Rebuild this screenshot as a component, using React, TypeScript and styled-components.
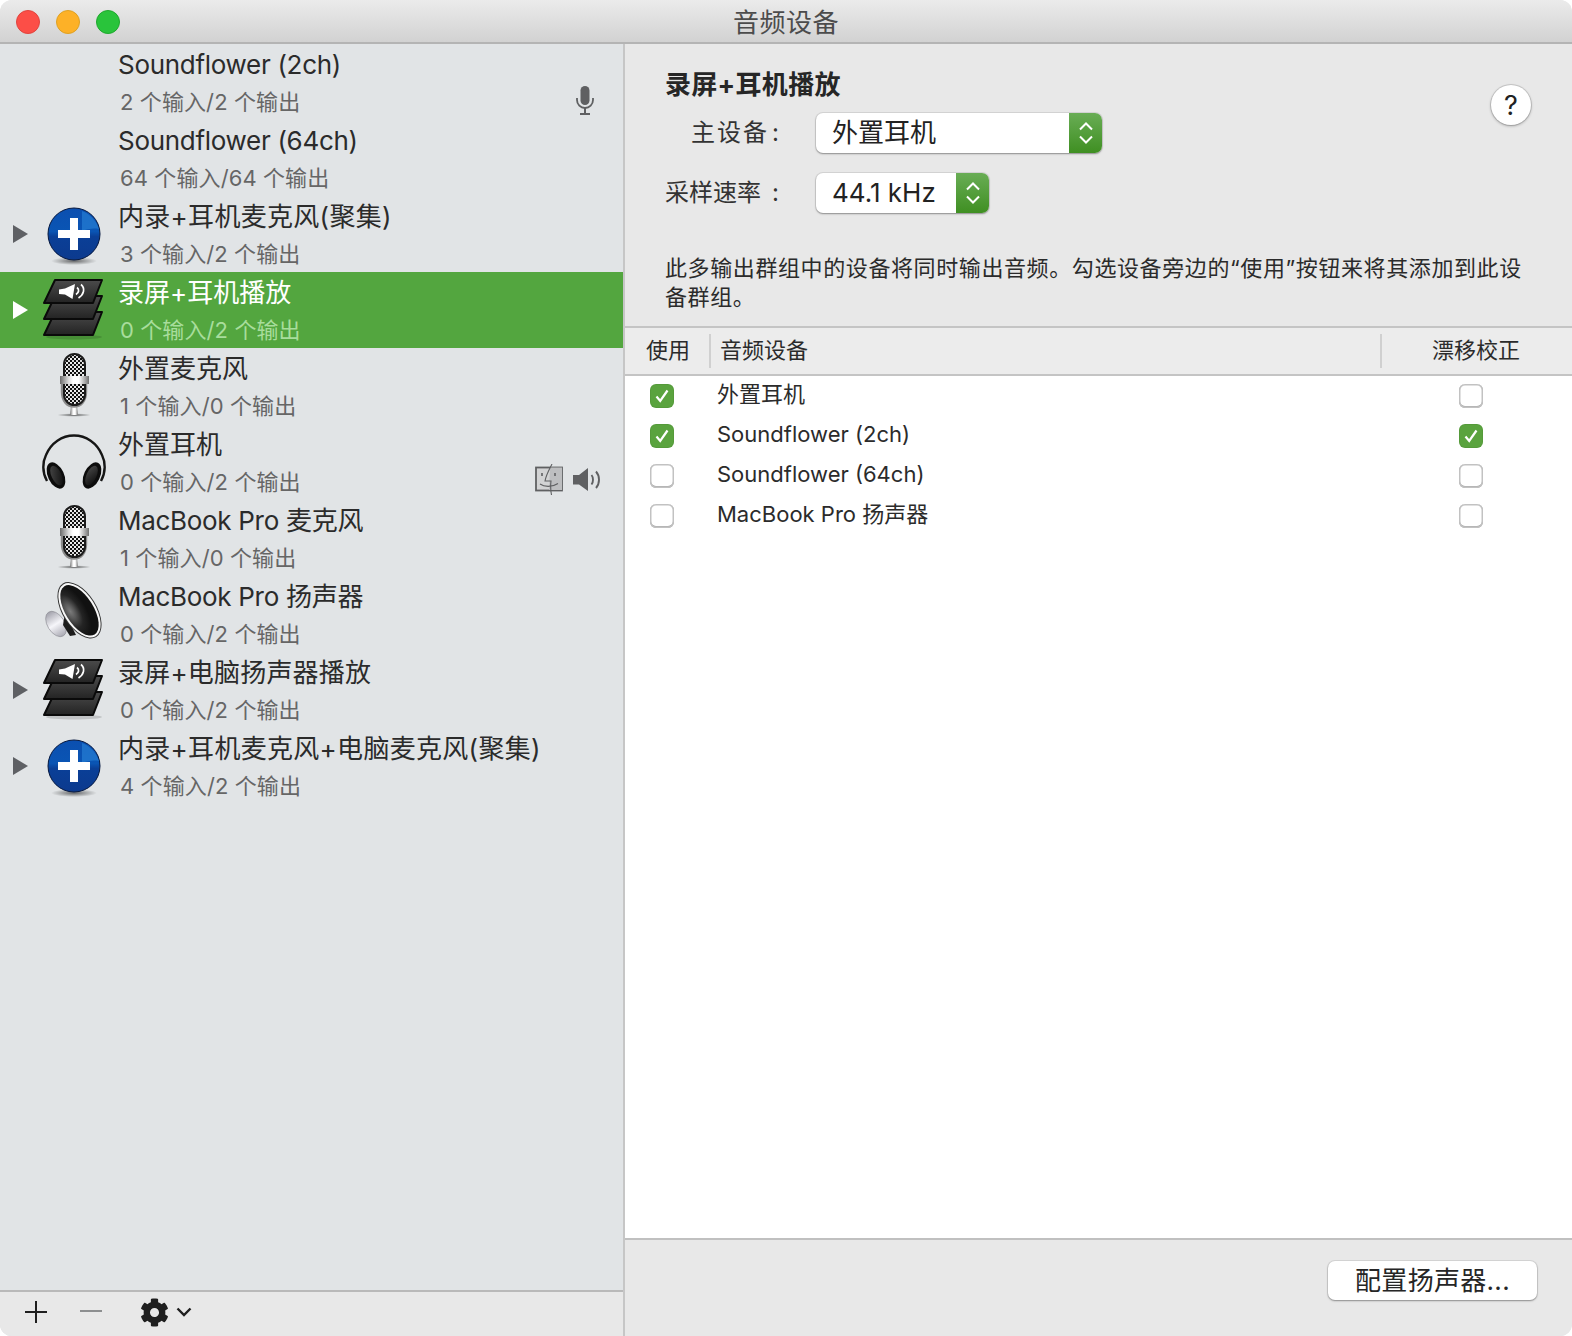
import React from "react";
import styled, { createGlobalStyle } from "styled-components";
import { FaCog } from "react-icons/fa";

const FONT = `Inter, "Noto Sans CJK SC", "Noto Sans", sans-serif`;

const GlobalStyle = createGlobalStyle`
  html, body {
    margin: 0;
    padding: 0;
    background: #fff;
    font-family: ${FONT};
  }
  * {
    box-sizing: border-box;
  }
`;

type IconName = "none" | "aggregate" | "stack" | "mic" | "headphones" | "speaker";

type Device = {
  name: string;
  info: string;
  icon: IconName;
  expandable?: boolean;
  selected?: boolean;
  status?: "input" | "output";
};

const devices: Device[] = [
  { name: "Soundflower (2ch)", info: "2 个输入/2 个输出", icon: "none", status: "input" },
  { name: "Soundflower (64ch)", info: "64 个输入/64 个输出", icon: "none" },
  { name: "内录+耳机麦克风(聚集)", info: "3 个输入/2 个输出", icon: "aggregate", expandable: true },
  { name: "录屏+耳机播放", info: "0 个输入/2 个输出", icon: "stack", expandable: true, selected: true },
  { name: "外置麦克风", info: "1 个输入/0 个输出", icon: "mic" },
  { name: "外置耳机", info: "0 个输入/2 个输出", icon: "headphones", status: "output" },
  { name: "MacBook Pro 麦克风", info: "1 个输入/0 个输出", icon: "mic" },
  { name: "MacBook Pro 扬声器", info: "0 个输入/2 个输出", icon: "speaker" },
  { name: "录屏+电脑扬声器播放", info: "0 个输入/2 个输出", icon: "stack", expandable: true },
  { name: "内录+耳机麦克风+电脑麦克风(聚集)", info: "4 个输入/2 个输出", icon: "aggregate", expandable: true },
];

const outputs = [
  { name: "外置耳机", use: true, drift: false },
  { name: "Soundflower (2ch)", use: true, drift: true },
  { name: "Soundflower (64ch)", use: false, drift: false },
  { name: "MacBook Pro 扬声器", use: false, drift: false },
];

// latin names run a bit narrower and the +/( glyphs a bit wider than in our fonts
const nameTracking = (name: string) => {
  if (/[a-z]/i.test(name)) return -0.3;
  if (name.includes("(")) return 0.3;
  if (name.includes("+") && name.length > 7) return 0.2;
  return 0;
};

const AggregateIcon = () => (
  <svg width="72" height="72" viewBox="0 0 72 72">
    <defs>
      <linearGradient id="aggBlue" x1="0" y1="0" x2="0" y2="1">
        <stop offset="0" stopColor="#0b4fb0" />
        <stop offset="0.45" stopColor="#0a55b4" />
        <stop offset="0.55" stopColor="#0a3f97" />
        <stop offset="1" stopColor="#0c3a8e" />
      </linearGradient>
      <radialGradient id="aggShadow">
        <stop offset="0" stopColor="#000" stopOpacity="0.55" />
        <stop offset="1" stopColor="#000" stopOpacity="0" />
      </radialGradient>
    </defs>
    <ellipse cx="36" cy="63" rx="23" ry="4" fill="url(#aggShadow)" />
    <circle cx="36" cy="36" r="26" fill="url(#aggBlue)" stroke="#06183f" strokeWidth="1" />
    <path d="M44 13C52 16 58 22 61 31C55 30 49 31 44 33Z" fill="#2a86d8" opacity="0.6" />
    <rect x="20" y="32" width="32" height="8" fill="#fff" />
    <rect x="32" y="20" width="8" height="32" fill="#fff" />
  </svg>
);

const StackIcon = () => (
  <svg width="72" height="72" viewBox="0 0 72 72">
    <defs>
      <linearGradient id="stackDark" x1="0" y1="0" x2="0" y2="1">
        <stop offset="0" stopColor="#4b4b4b" />
        <stop offset="1" stopColor="#232323" />
      </linearGradient>
    </defs>
    <ellipse cx="36" cy="63" rx="28" ry="2.5" fill="#000" opacity="0.14" />
    <path d="M17 38H64L55 61H6Z" fill="url(#stackDark)" stroke="#0a0a0a" strokeWidth="2" strokeLinejoin="round" />
    <path d="M17 22H64L55 45H6Z" fill="url(#stackDark)" stroke="#0a0a0a" strokeWidth="2" strokeLinejoin="round" />
    <path d="M17 6H64L55 29H6Z" fill="url(#stackDark)" stroke="#0a0a0a" strokeWidth="2" strokeLinejoin="round" />
    <path d="M21 15.5L27 14.500L37 10L34.500 25L27 20.500L21 20Z" fill="#fff" />
    <path d="M39 13.500C41.500 15.500 41 18.500 38 20.500" fill="none" stroke="#fff" strokeWidth="1.700" />
    <path d="M43 10.500C47.500 14.500 46 20.500 40.500 24" fill="none" stroke="#fff" strokeWidth="1.700" />
  </svg>
);

const MicIcon = () => (
  <svg width="72" height="72" viewBox="0 0 72 72">
    <defs>
      <pattern id="micMesh" width="4" height="4" patternUnits="userSpaceOnUse">
        <rect width="4" height="4" fill="#111" />
        <rect width="2" height="2" fill="#f0f0f0" />
        <rect x="2" y="2" width="2" height="2" fill="#d8d8d8" />
      </pattern>
      <linearGradient id="micSilver" x1="0" y1="0" x2="1" y2="0">
        <stop offset="0" stopColor="#6a6a6a" />
        <stop offset="0.3" stopColor="#dcdcdc" />
        <stop offset="0.45" stopColor="#ffffff" />
        <stop offset="0.65" stopColor="#ffffff" />
        <stop offset="1" stopColor="#707070" />
      </linearGradient>
      <radialGradient id="micShadow">
        <stop offset="0" stopColor="#000" stopOpacity="0.6" />
        <stop offset="1" stopColor="#000" stopOpacity="0" />
      </radialGradient>
    </defs>
    <ellipse cx="36" cy="65" rx="17" ry="1.800" fill="url(#micShadow)" />
    <path d="M33 56H39L40 65H32Z" fill="url(#micSilver)" />
    <path d="M24 30V42C24 51 29 56.500 36 56.500C43 56.500 48 51 48 42V30" fill="none" stroke="#8b8b8b" strokeWidth="2.400" />
    <rect x="26" y="4" width="21" height="51" rx="10.500" fill="url(#micMesh)" stroke="#1c1c1c" strokeWidth="2" />
    <rect x="22" y="26" width="29" height="8" fill="url(#micSilver)" />
  </svg>
);

const HeadphonesIcon = () => (
  <svg width="72" height="72" viewBox="0 0 72 72">
    <defs>
      <linearGradient id="cupDark" x1="0" y1="0" x2="1" y2="1">
        <stop offset="0" stopColor="#4a4a4a" />
        <stop offset="1" stopColor="#0b0b0b" />
      </linearGradient>
    </defs>
    <path d="M9 55C4 46 4.500 36 8 29C13 17 24 9.500 36 9.500C48 9.500 59 17 64 29C67.500 36 68 46 63 55" fill="none" stroke="#161616" strokeWidth="2.400" />
    <ellipse cx="18" cy="49.500" rx="8" ry="14" fill="#0c0c0c" transform="rotate(-25 18 49.500)" />
    <ellipse cx="18.500" cy="49.500" rx="5" ry="10.500" fill="url(#cupDark)" transform="rotate(-25 18.500 49.500)" />
    <ellipse cx="54" cy="49.500" rx="8" ry="14" fill="#0c0c0c" transform="rotate(25 54 49.500)" />
    <ellipse cx="53.500" cy="49.500" rx="5" ry="10.500" fill="url(#cupDark)" transform="rotate(25 53.500 49.500)" />
  </svg>
);

const SpeakerIcon = () => (
  <svg width="72" height="72" viewBox="0 0 72 72">
    <defs>
      <linearGradient id="magnet" x1="0" y1="0" x2="0" y2="1">
        <stop offset="0" stopColor="#a0a0aa" />
        <stop offset="0.5" stopColor="#f6f6fa" />
        <stop offset="1" stopColor="#a8a8b2" />
      </linearGradient>
      <radialGradient id="coneDark" cx="0.2" cy="0.43" r="0.55">
        <stop offset="0" stopColor="#7c7c7c" />
        <stop offset="0.25" stopColor="#5a5a5a" />
        <stop offset="0.6" stopColor="#242424" />
        <stop offset="1" stopColor="#111" />
      </radialGradient>
    </defs>
    <ellipse cx="18" cy="46" rx="8.500" ry="14" fill="url(#magnet)" stroke="#8b8b93" strokeWidth="0.600" transform="rotate(-32 18 46)" />
    <path d="M27 35L38 57L32 58L25 47Z" fill="#1c1c1c" />
    <ellipse cx="41.500" cy="32.300" rx="17" ry="31.500" fill="#333" transform="rotate(-32 41.500 32.300)" />
    <ellipse cx="41.500" cy="32.300" rx="16" ry="30.500" fill="#f8f8f8" transform="rotate(-32 41.500 32.300)" />
    <ellipse cx="41.500" cy="32.300" rx="14" ry="28.500" fill="url(#coneDark)" transform="rotate(-32 41.500 32.300)" />
  </svg>
);

const deviceIcons: Record<IconName, React.ComponentType | null> = {
  none: null,
  aggregate: AggregateIcon,
  stack: StackIcon,
  mic: MicIcon,
  headphones: HeadphonesIcon,
  speaker: SpeakerIcon,
};

const InputStatusIcon = () => (
  <svg width="20" height="32" viewBox="0 0 20 32">
    <rect x="5.500" y="1" width="9" height="19" rx="4.500" fill="#5f6062" />
    <path d="M2 13V15C2 19.500 5.500 23 10 23C14.500 23 18 19.500 18 15V13" fill="none" stroke="#5f6062" strokeWidth="1.800" />
    <path d="M10 23V28M5 29H15" stroke="#5f6062" strokeWidth="2" fill="none" />
  </svg>
);

const FinderStatusIcon = () => (
  <svg width="30" height="32" viewBox="0 0 30 32">
    <rect x="1" y="3.500" width="26" height="23" fill="#d2d3d4" stroke="#5f6062" strokeWidth="1.800" />
    <path d="M15 3.500H27V26H14Z" fill="#bdbec0" />
    <path d="M17 0C14 6 11 11 10 17H16C15.500 21 15.500 26 16.500 31" fill="none" stroke="#5f6062" strokeWidth="1.100" />
    <path d="M7 9V12M20 9V12" stroke="#5f6062" strokeWidth="1.600" />
    <path d="M5 20C9 23 17 23.500 23 19.500" fill="none" stroke="#5f6062" strokeWidth="1.100" />
  </svg>
);

const OutputStatusIcon = () => (
  <svg width="30" height="32" viewBox="0 0 30 32">
    <path d="M1 11H7L16 4V27L7 20.500H1Z" fill="#5f6062" />
    <path d="M19.500 11C21.500 13.500 21.500 18 19.500 20.500" fill="none" stroke="#5f6062" strokeWidth="1.900" />
    <path d="M24 7.500C28 12 28 19.500 24 24" fill="none" stroke="#5f6062" strokeWidth="1.900" />
  </svg>
);

const Stepper = () => (
  <svg width="18" height="28" viewBox="0 0 18 28">
    <path d="M3 10.500L9 4.500L15 10.500M3 17.500L9 23.500L15 17.500" fill="none" stroke="#fff" strokeWidth="2" />
  </svg>
);

const Tick = () => (
  <svg width="16" height="16" viewBox="0 0 16 16">
    <path d="M2.500 8.500L6.200 13L13.500 2.500" fill="none" stroke="#fff" strokeWidth="2.200" />
  </svg>
);

const App = () => {
  return (
    <Window>
      <GlobalStyle />
      <TitleBar>
        <Lights>
          <Light $color="#fc4e47" $edge="#e0443e" />
          <Light $color="#fdb127" $edge="#dea123" />
          <Light $color="#29c43b" $edge="#1fa82e" />
        </Lights>
        <WindowTitle>音频设备</WindowTitle>
      </TitleBar>
      <Main>
        <Sidebar>
          <DeviceList>
            {devices.map((device) => {
              const Icon = deviceIcons[device.icon];
              return (
                <DeviceRow key={device.name} $selected={device.selected}>
                  <Disclosure>
                    {device.expandable && <Triangle $selected={device.selected} />}
                  </Disclosure>
                  <IconSlot>{Icon && <Icon />}</IconSlot>
                  <DeviceText>
                    <DeviceName $selected={device.selected} $tracking={nameTracking(device.name)}>
                      {device.name}
                    </DeviceName>
                    <DeviceInfo $selected={device.selected}>{device.info}</DeviceInfo>
                  </DeviceText>
                  {device.status === "input" && (
                    <Status $inset={28} $drop={3}>
                      <InputStatusIcon />
                    </Status>
                  )}
                  {device.status === "output" && (
                    <Status $inset={21} $drop={4}>
                      <FinderStatusIcon />
                      <OutputStatusIcon />
                    </Status>
                  )}
                </DeviceRow>
              );
            })}
          </DeviceList>
          <SidebarToolbar>
            <ToolButton $color="#1f1f1f">
              <svg width="24" height="24" viewBox="0 0 24 24">
                <path d="M12 1V23M1 12H23" stroke="currentColor" strokeWidth="2" />
              </svg>
            </ToolButton>
            <ToolButton $color="#8d8f90">
              <svg width="24" height="24" viewBox="0 0 24 24">
                <path d="M1 11H23" stroke="currentColor" strokeWidth="2" />
              </svg>
            </ToolButton>
            <GearButton>
              <FaCog size={29} />
              <svg width="16" height="10" viewBox="0 0 16 10">
                <path d="M1.500 1.500L8 8L14.500 1.500" fill="none" stroke="currentColor" strokeWidth="2.400" />
              </svg>
            </GearButton>
          </SidebarToolbar>
        </Sidebar>
        <Detail>
          <DetailHead>
            <HeadRow>
              <Form>
                <DetailTitle>录屏+耳机播放</DetailTitle>
                <Field>
                  <FieldLabel $tracking={2}>
                    主设备<Colon $gap={3}>:</Colon>
                  </FieldLabel>
                  <Select $width={286}>
                    <SelectValue>外置耳机</SelectValue>
                    <SelectArrow>
                      <Stepper />
                    </SelectArrow>
                  </Select>
                </Field>
                <Field>
                  <FieldLabel $tracking={0}>
                    采样速率<Colon $gap={11}>:</Colon>
                  </FieldLabel>
                  <Select $width={173}>
                    <SelectValue>44.1 kHz</SelectValue>
                    <SelectArrow>
                      <Stepper />
                    </SelectArrow>
                  </Select>
                </Field>
              </Form>
              <HelpButton>?</HelpButton>
            </HeadRow>
            <Description>
              此多输出群组中的设备将同时输出音频。勾选设备旁边的“使用”按钮来将其添加到此设备群组。
            </Description>
          </DetailHead>
          <Table>
            <TableHead>
              <UseHeader>使用</UseHeader>
              <NameHeader>音频设备</NameHeader>
              <DriftHeader>漂移校正</DriftHeader>
            </TableHead>
            <TableBody>
              {outputs.map((output) => (
                <TableRow key={output.name}>
                  <UseCell>
                    <Checkbox $checked={output.use}>{output.use && <Tick />}</Checkbox>
                  </UseCell>
                  <NameCell>{output.name}</NameCell>
                  <DriftCell>
                    <Checkbox $checked={output.drift}>{output.drift && <Tick />}</Checkbox>
                  </DriftCell>
                </TableRow>
              ))}
            </TableBody>
          </Table>
          <DetailFooter>
            <ConfigButton>配置扬声器...</ConfigButton>
          </DetailFooter>
        </Detail>
      </Main>
    </Window>
  );
};

const Window = styled.div`
  width: 1572px;
  height: 1336px;
  display: flex;
  flex-direction: column;
  border-radius: 12px;
  overflow: hidden;
  background: #e8e8e8;
  color: #262626;
  font-family: ${FONT};
`;

const TitleBar = styled.header`
  flex: none;
  height: 44px;
  display: flex;
  align-items: center;
  justify-content: center;
  position: relative;
  background: linear-gradient(#ebebeb, #d2d2d2);
  border-bottom: 2px solid #b4b4b4;
`;

const Lights = styled.div`
  position: absolute;
  left: 16px;
  top: 10px;
  display: flex;
  gap: 16px;
`;

const Light = styled.span<{ $color: string; $edge: string }>`
  width: 24px;
  height: 24px;
  border-radius: 50%;
  background: ${(p) => p.$color};
  border: 1px solid ${(p) => p.$edge};
`;

const WindowTitle = styled.div`
  font-size: 26px;
  line-height: 44px;
  padding-top: 3px;
  letter-spacing: 0.5px;
  color: #4c4c4c;
`;

const Main = styled.div`
  flex: 1;
  min-height: 0;
  display: flex;
`;

const Sidebar = styled.aside`
  flex: none;
  width: 625px;
  display: flex;
  flex-direction: column;
  background: #e1e4e6;
  border-right: 2px solid #c6c6c6;
`;

const DeviceList = styled.div`
  flex: 1;
`;

const DeviceRow = styled.div<{ $selected?: boolean }>`
  height: 76px;
  display: flex;
  align-items: center;
  background: ${(p) => (p.$selected ? "#53a63f" : "transparent")};
`;

const Disclosure = styled.div`
  flex: none;
  width: 38px;
  padding-left: 13px;
`;

const Triangle = styled.div<{ $selected?: boolean }>`
  width: 15px;
  height: 18px;
  background: ${(p) => (p.$selected ? "#fff" : "#5e6064")};
  clip-path: polygon(0 0, 100% 50%, 0 100%);
`;

const IconSlot = styled.div`
  flex: none;
  width: 72px;
  height: 72px;
  margin-right: 8px;
`;

const DeviceText = styled.div`
  flex: 1;
  min-width: 0;
  height: 76px;
`;

const DeviceName = styled.div<{ $selected?: boolean; $tracking: number }>`
  font-size: 26px;
  line-height: 38px;
  height: 38px;
  margin-top: 2px;
  white-space: nowrap;
  letter-spacing: ${(p) => p.$tracking}px;
  color: ${(p) => (p.$selected ? "#fff" : "#2b2b2b")};
`;

const DeviceInfo = styled.div<{ $selected?: boolean }>`
  font-size: 22px;
  line-height: 36px;
  padding-left: 2px;
  letter-spacing: 0.1px;
  white-space: nowrap;
  color: ${(p) => (p.$selected ? "#a8dd9c" : "#666")};
`;

const Status = styled.div<{ $inset: number; $drop: number }>`
  flex: none;
  align-self: flex-end;
  margin-bottom: ${(p) => p.$drop}px;
  padding-right: ${(p) => p.$inset}px;
  display: flex;
  align-items: center;
  gap: 7px;
`;

const SidebarToolbar = styled.div`
  flex: none;
  height: 46px;
  display: flex;
  align-items: center;
  padding: 0 0 4px 24px;
  background: #e8e8e8;
  border-top: 2px solid #b9b9b9;
`;

const ToolButton = styled.div<{ $color: string }>`
  width: 24px;
  height: 24px;
  margin-right: 31px;
  color: ${(p) => p.$color};
`;

const GearButton = styled.div`
  display: flex;
  align-items: center;
  gap: 7px;
  margin-left: 6px;
  color: #1f1f1f;
`;

const Detail = styled.main`
  flex: 1;
  min-width: 0;
  display: flex;
  flex-direction: column;
`;

const DetailHead = styled.section`
  flex: none;
  height: 282px;
  padding: 23px 0 0 40px;
  background: #e8e8e8;
`;

const HeadRow = styled.div`
  display: flex;
  align-items: flex-start;
  justify-content: space-between;
  padding-right: 41px;
`;

const Form = styled.div`
  display: flex;
  flex-direction: column;
  gap: 20px;
`;

const DetailTitle = styled.h1`
  margin: 0 0 -10px;
  font-size: 26px;
  line-height: 36px;
  font-weight: 700;
  letter-spacing: 0.3px;
  color: #262626;
`;

const Field = styled.div`
  display: grid;
  grid-template-columns: 119px auto;
  column-gap: 32px;
  align-items: center;
  justify-content: start;
`;

const FieldLabel = styled.label<{ $tracking: number }>`
  text-align: right;
  padding-right: 5px;
  font-size: 24px;
  line-height: 40px;
  letter-spacing: ${(p) => p.$tracking}px;
  white-space: nowrap;
  color: #333;
`;

const Colon = styled.span<{ $gap: number }>`
  margin-left: ${(p) => p.$gap}px;
  letter-spacing: 0;
`;

const Select = styled.div<{ $width: number }>`
  width: ${(p) => p.$width}px;
  height: 40px;
  display: flex;
  border-radius: 7px;
  overflow: hidden;
  background: #fff;
  box-shadow: 0 0 0 1px rgba(0, 0, 0, 0.08), 0 1px 2px rgba(0, 0, 0, 0.35);
`;

const SelectValue = styled.div`
  flex: 1;
  padding-left: 16px;
  font-size: 26px;
  line-height: 40px;
  color: #222;
`;

const SelectArrow = styled.div`
  flex: none;
  width: 33px;
  display: flex;
  align-items: center;
  justify-content: center;
  background: linear-gradient(#69ad55, #3f8f22);
`;

const HelpButton = styled.div`
  flex: none;
  width: 40px;
  height: 40px;
  margin-top: 18px;
  border-radius: 50%;
  display: flex;
  align-items: center;
  justify-content: center;
  background: #fff;
  font-size: 27px;
  color: #222;
  box-shadow: 0 0 0 1px rgba(0, 0, 0, 0.12), 0 1px 3px rgba(0, 0, 0, 0.3);
`;

const Description = styled.p`
  margin: 41px 0 0;
  width: 860px;
  font-size: 22px;
  line-height: 29px;
  letter-spacing: 0.6px;
  color: #2b2b2b;
`;

const Table = styled.section`
  flex: 1;
  min-height: 0;
  display: flex;
  flex-direction: column;
  background: #fff;
`;

const TableHead = styled.div`
  flex: none;
  height: 50px;
  display: flex;
  align-items: center;
  padding-bottom: 1px;
  background: #ececec;
  border-top: 2px solid #c4c4c4;
  border-bottom: 2px solid #c4c4c4;
  font-size: 22px;
  color: #2b2b2b;
`;

const UseHeader = styled.div`
  width: 86px;
  height: 34px;
  line-height: 32px;
  padding-left: 21px;
  border-right: 2px solid #d0d0d0;
`;

const NameHeader = styled.div`
  width: 671px;
  height: 34px;
  line-height: 32px;
  padding-left: 9px;
  border-right: 2px solid #d0d0d0;
`;

const DriftHeader = styled.div`
  flex: 1;
  padding-left: 50px;
  line-height: 32px;
  height: 34px;
`;

const TableBody = styled.div`
  flex: 1;
`;

const TableRow = styled.div`
  height: 40px;
  display: flex;
  align-items: center;
`;

const UseCell = styled.div`
  flex: none;
  width: 92px;
  padding-left: 25px;
`;

const NameCell = styled.div`
  flex: 1;
  font-size: 22px;
  line-height: 36px;
  margin-top: -4px;
  color: #2b2b2b;
`;

const DriftCell = styled.div`
  flex: none;
  width: 113px;
`;

const Checkbox = styled.div<{ $checked: boolean }>`
  width: 24px;
  height: 24px;
  border-radius: 6px;
  display: flex;
  align-items: center;
  justify-content: center;
  background: ${(p) => (p.$checked ? "#5aa33e" : "#fff")};
  box-shadow: ${(p) =>
    p.$checked
      ? "inset 0 0 0 1px rgba(0, 0, 0, 0.05)"
      : "inset 0 0 0 1.5px #c2c2c2, inset 0 -1px 0 1px #aaa"};
`;

const DetailFooter = styled.footer`
  flex: none;
  height: 98px;
  display: flex;
  justify-content: flex-end;
  padding: 21px 35px 0 0;
  background: #e8e8e8;
  border-top: 2px solid #c0c0c0;
`;

const ConfigButton = styled.div`
  width: 209px;
  height: 39px;
  border-radius: 7px;
  background: #fff;
  text-align: center;
  font-size: 26px;
  line-height: 39px;
  letter-spacing: 0.3px;
  color: #262626;
  box-shadow: 0 0 0 1px rgba(0, 0, 0, 0.08), 0 1px 2px rgba(0, 0, 0, 0.35);
`;

export default App;
